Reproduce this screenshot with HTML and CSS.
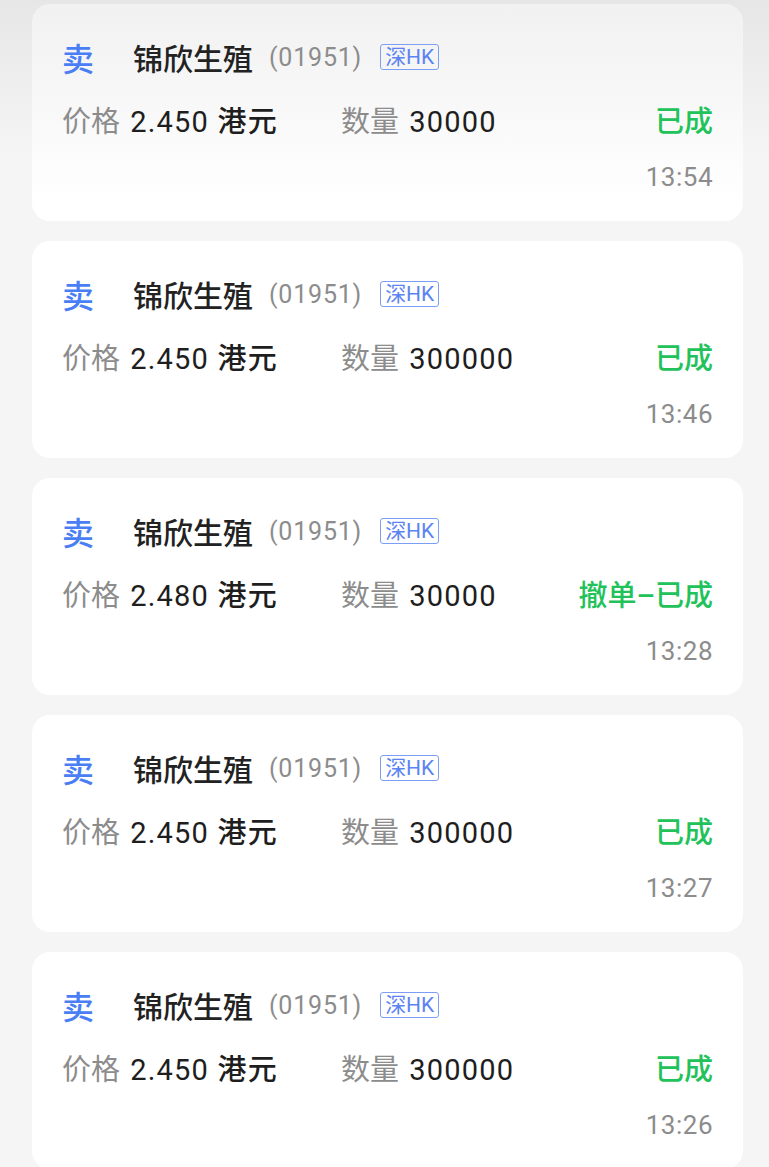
FILE: index.html
```html
<!DOCTYPE html>
<html>
    <head>
        <meta charset="utf-8">
        <title>委托记录</title>
        <link rel="stylesheet" href="styles.css">
    </head>
    <body>
        <div class="list">
            <div class="card top">
                <div class="head">
                    <span class="side">卖</span>
                    <span class="name">锦欣生殖</span>
                    <span class="code">(01951)</span>
                    <span class="tag">深HK</span>
                </div>
                <div class="info">
                    <div class="price"><span class="label">价格</span> <span class="val">2.450 <b>港元</b></span></div>
                    <div class="qty"><span class="label">数量</span> <span class="val">30000</span></div>
                    <div class="status">已成</div>
                </div>
                <div class="time">13:54</div>
            </div>
            <div class="card">
                <div class="head">
                    <span class="side">卖</span>
                    <span class="name">锦欣生殖</span>
                    <span class="code">(01951)</span>
                    <span class="tag">深HK</span>
                </div>
                <div class="info">
                    <div class="price"><span class="label">价格</span> <span class="val">2.450 <b>港元</b></span></div>
                    <div class="qty"><span class="label">数量</span> <span class="val">300000</span></div>
                    <div class="status">已成</div>
                </div>
                <div class="time">13:46</div>
            </div>
            <div class="card">
                <div class="head">
                    <span class="side">卖</span>
                    <span class="name">锦欣生殖</span>
                    <span class="code">(01951)</span>
                    <span class="tag">深HK</span>
                </div>
                <div class="info">
                    <div class="price"><span class="label">价格</span> <span class="val">2.480 <b>港元</b></span></div>
                    <div class="qty"><span class="label">数量</span> <span class="val">30000</span></div>
                    <div class="status">撤单–已成</div>
                </div>
                <div class="time">13:28</div>
            </div>
            <div class="card">
                <div class="head">
                    <span class="side">卖</span>
                    <span class="name">锦欣生殖</span>
                    <span class="code">(01951)</span>
                    <span class="tag">深HK</span>
                </div>
                <div class="info">
                    <div class="price"><span class="label">价格</span> <span class="val">2.450 <b>港元</b></span></div>
                    <div class="qty"><span class="label">数量</span> <span class="val">300000</span></div>
                    <div class="status">已成</div>
                </div>
                <div class="time">13:27</div>
            </div>
            <div class="card">
                <div class="head">
                    <span class="side">卖</span>
                    <span class="name">锦欣生殖</span>
                    <span class="code">(01951)</span>
                    <span class="tag">深HK</span>
                </div>
                <div class="info">
                    <div class="price"><span class="label">价格</span> <span class="val">2.450 <b>港元</b></span></div>
                    <div class="qty"><span class="label">数量</span> <span class="val">300000</span></div>
                    <div class="status">已成</div>
                </div>
                <div class="time">13:26</div>
            </div>
        </div>
    </body>
</html>
```

FILE: styles.css
```css
body {
    margin: 0;
    background: linear-gradient(#e6e6e6, #f5f5f5 160px);
    font-family: Roboto, "Noto Sans CJK SC", sans-serif;
    color: #222;
}
.list {
    display: flex;
    flex-direction: column;
    gap: 20px;
    padding: 4px 26px 20px 32px;
}
.card {
    background: #fff;
    border-radius: 18px;
    padding: 33px 30px 29px 30px;
}
.card.top {
    background: linear-gradient(#f1f1f1, #fff 200px);
}
.head {
    display: flex;
    align-items: center;
    height: 40px;
}
.side {
    color: #4a7ef5;
    font-size: 32px;
    font-weight: 500;
    width: 71px;
}
.name {
    font-size: 30px;
    font-weight: 500;
    color: #222;
}
.code {
    font-size: 25px;
    color: #8c8c8c;
    margin-left: 16px;
    letter-spacing: 0.8px;
}
.tag {
    margin-left: 18px;
    font-size: 21px;
    line-height: 24px;
    color: #5b84f2;
    border: 1px solid #7c9ff5;
    border-radius: 3px;
    padding: 0 4px;
}
.info {
    display: flex;
    align-items: center;
    height: 40px;
    margin-top: 22px;
    font-size: 29px;
}
.price {
    width: 279px;
}
.label {
    color: #8c8c8c;
}
.val {
    color: #1e1e1e;
    letter-spacing: 1.2px;
    margin-left: 3px;
}
.val b {
    font-weight: 500;
}
.status {
    margin-left: auto;
    color: #22c25a;
    font-weight: 500;
}
.time {
    text-align: right;
    font-size: 26px;
    line-height: 30px;
    margin-top: 23px;
    color: #8c8c8c;
    letter-spacing: 0.5px;
}
```
